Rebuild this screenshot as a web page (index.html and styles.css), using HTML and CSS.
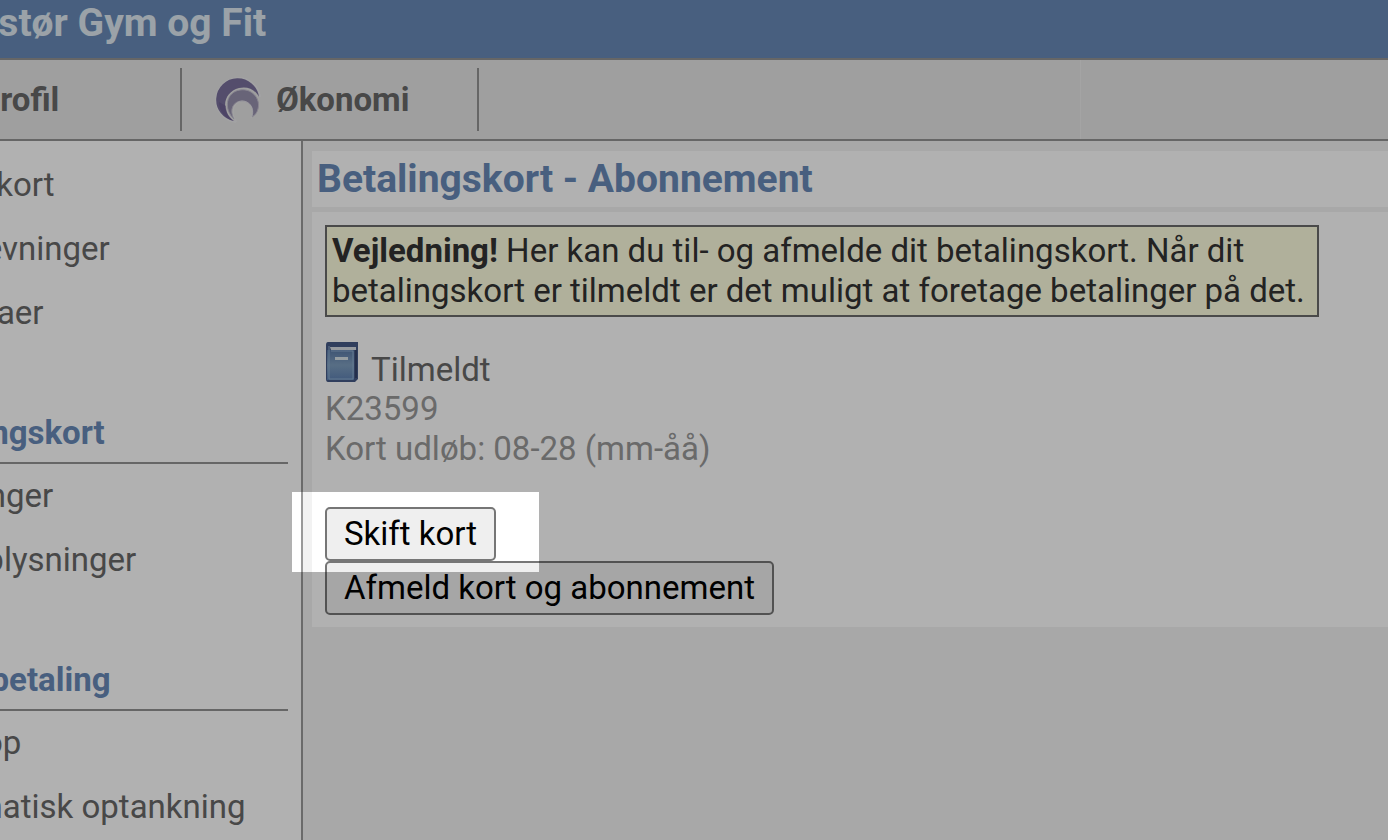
FILE: index.html
```html
<!DOCTYPE html>
<html lang="da">

<head>
    <meta charset="utf-8">
    <meta name="viewport" content="width=device-width, initial-scale=1.0">
    <title>Betalingskort - Abonnement</title>
    <link rel="stylesheet" href="styles.css">
</head>

<body>
    <header>
        <h1>Løgstør Gym og Fit</h1>
    </header>
    <nav>
        <a href="#" class="profil">Profil</a>
        <a href="#" class="okonomi">
            <svg class="maane" viewBox="0 0 48 48" aria-hidden="true">
                <path d="M22 46A22 22 0 1 1 46 21" fill="none" stroke="#f0f0f4" stroke-width="2" opacity=".4" />
                <path d="M20 45A21.500 21.500 0 1 1 45 21C41 13 33 10 25 12C14 15 9 25 12 34C13 39 17 43 20 45Z" fill="#7a709c" />
                <path d="M20 43C9 33 12 16 26 14C37 12 47 22 44 33C43 37 41 39 38 41C41 31 35 25 28 25C19 25 15 34 20 43Z" fill="#9790ae" stroke="#c4c0d0" stroke-width="1" />
                <path d="M5 26C5 36 12 43 20 45C15 41 12 37 12 30Z" fill="#64548c" opacity=".5" />
                <path d="M23 46C16 38 19 26 28 25C37 25 41 35 37 42" fill="none" stroke="#ececf0" stroke-width="1" opacity=".7" />
            </svg>
            Økonomi
        </a>
        <span class="kant"></span>
    </nav>
    <div class="side">
        <aside>
            <ul>
                <li><a href="#">Klippekort</a></li>
                <li><a href="#">Opkrævninger</a></li>
                <li><a href="#">Fakturaer</a></li>
            </ul>
            <h3>Betalingskort</h3>
            <ul>
                <li><a href="#">Betalinger</a></li>
                <li><a href="#">Kortoplysninger</a></li>
            </ul>
            <h3>Forudbetaling</h3>
            <ul>
                <li><a href="#">Tank op</a></li>
                <li><a href="#">Automatisk optankning</a></li>
            </ul>
        </aside>
        <main>
            <h2>Betalingskort - Abonnement</h2>
            <section>
                <p class="vejledning"><b>Vejledning!</b> Her kan du til- og afmelde dit betalingskort. Når dit betalingskort er tilmeldt er det muligt at foretage betalinger på det.</p>
                <div class="status">
                    <svg class="bog" viewBox="0 0 34 40" aria-hidden="true">
                        <defs>
                            <linearGradient id="omslag" x1="0" y1="0" x2="0" y2="1">
                                <stop offset="0" stop-color="#5a7aa8" />
                                <stop offset=".5" stop-color="#7f9fbf" />
                                <stop offset="1" stop-color="#5f82b4" />
                            </linearGradient>
                        </defs>
                        <path d="M3 0H33V37L30 40H3Q1 40 1 37V3Q1 0 3 0Z" fill="#465a86" />
                        <path d="M5 5H31V8H6Z" fill="#d8dee6" />
                        <rect x="2" y="8" width="27" height="30" fill="url(#omslag)" />
                        <path d="M4 4V37H28V9H6" fill="none" stroke="#8fafd0" stroke-width="1" />
                        <path d="M31 8V36" stroke="#34446c" stroke-width="2" />
                        <rect x="10" y="15" width="13" height="3" fill="#d8e4ea" />
                    </svg>
                    Tilmeldt
                </div>
                <p class="kortinfo">K23599<br>Kort udløb: 08-28 (mm-åå)</p>
                <div class="knapper">
                    <div class="trin">
                        <button type="button">Skift kort</button>
                        <div class="fremhaev"></div>
                    </div>
                    <button type="button">Afmeld kort og abonnement</button>
                </div>
            </section>
        </main>
    </div>
</body></html>
```
FILE: styles.css
```css
* {
    padding: 0;
    margin: 0;
    box-sizing: border-box;
}

/* siden er rullet lidt ind fra venstre */
body {
    display: flex;
    flex-direction: column;
    min-height: 100vh;
    margin-left: -112px;
    overflow: hidden;
    font-family: Roboto, sans-serif;
    font-size: 33px;
    line-height: 40px;
    color: #686868;
    background-color: #f2f2f2;
}

a {
    color: inherit;
    text-decoration: none;
}

header {
    height: 60px;
    padding-left: 45px;
    background-color: #688ab8;
    border-bottom: 2px solid #949494;
}

header h1 {
    font-size: 39px;
    line-height: 46px;
    color: #dfeaf2;
}

nav {
    display: flex;
    align-items: center;
    height: 81px;
    background-color: #e6e6e6;
    border-bottom: 2px solid #949494;
    font-weight: 700;
}

nav a {
    display: flex;
    align-items: center;
    height: 63px;
    border-right: 2px solid #949494;
}

.profil {
    width: 294px;
    padding-left: 91px;
}

.okonomi {
    width: 297px;
    padding-left: 32px;
    gap: 14px;
}

.maane {
    width: 48px;
    height: 48px;
}

.kant {
    width: 308px;
    height: 100%;
    margin-left: auto;
    border-left: 1px solid #ececec;
}

.side {
    display: flex;
    flex: 1;
}

aside {
    width: 415px;
    padding-top: 12px;
    padding-left: 17px;
    padding-right: 13px;
    background-color: #ffffff;
    border-right: 2px solid #999999;
}

aside ul {
    list-style: none;
}

aside li {
    line-height: 64px;
    white-space: nowrap;
}

aside h3 {
    padding-top: 68px;
    padding-bottom: 9px;
    border-bottom: 2px solid #949494;
    font-size: 33px;
    color: #688ab8;
}

main {
    flex: 1;
    padding-top: 10px;
    padding-left: 9px;
}

main h2 {
    padding-left: 5px;
    margin-bottom: 5px;
    font-size: 39px;
    line-height: 56px;
    color: #688ab8;
    background-color: #ffffff;
}

section {
    padding: 13px 69px 12px 13px;
    background-color: #ffffff;
}

.vejledning {
    padding: 4px 5px;
    margin-bottom: 25px;
    border: 2px solid #6b6b6b;
    color: #333333;
    background-color: #fefee0;
}

.status {
    display: flex;
    gap: 12px;
    line-height: 56px;
    height: 47px;
}

.bog {
    width: 34px;
    height: 40px;
}

.kortinfo {
    margin-bottom: 38px;
    color: #999999;
}

.knapper {
    display: flex;
    flex-direction: column;
    align-items: flex-start;
}

button {
    display: block;
    height: 54px;
    padding: 0 17px;
    border: 2px solid #767676;
    border-radius: 5px;
    font: inherit;
    color: #000000;
    background-color: #efefef;
}

button:hover {
    cursor: pointer;
}

.trin {
    position: relative;
}

/* dæmper alt uden for feltet */
.fremhaev {
    position: absolute;
    z-index: 1;
    top: -15px;
    right: -43px;
    bottom: -11px;
    left: -33px;
    box-shadow: 0 0 0 200vmax rgba(0, 0, 0, 0.306);
    pointer-events: none;
}
```
